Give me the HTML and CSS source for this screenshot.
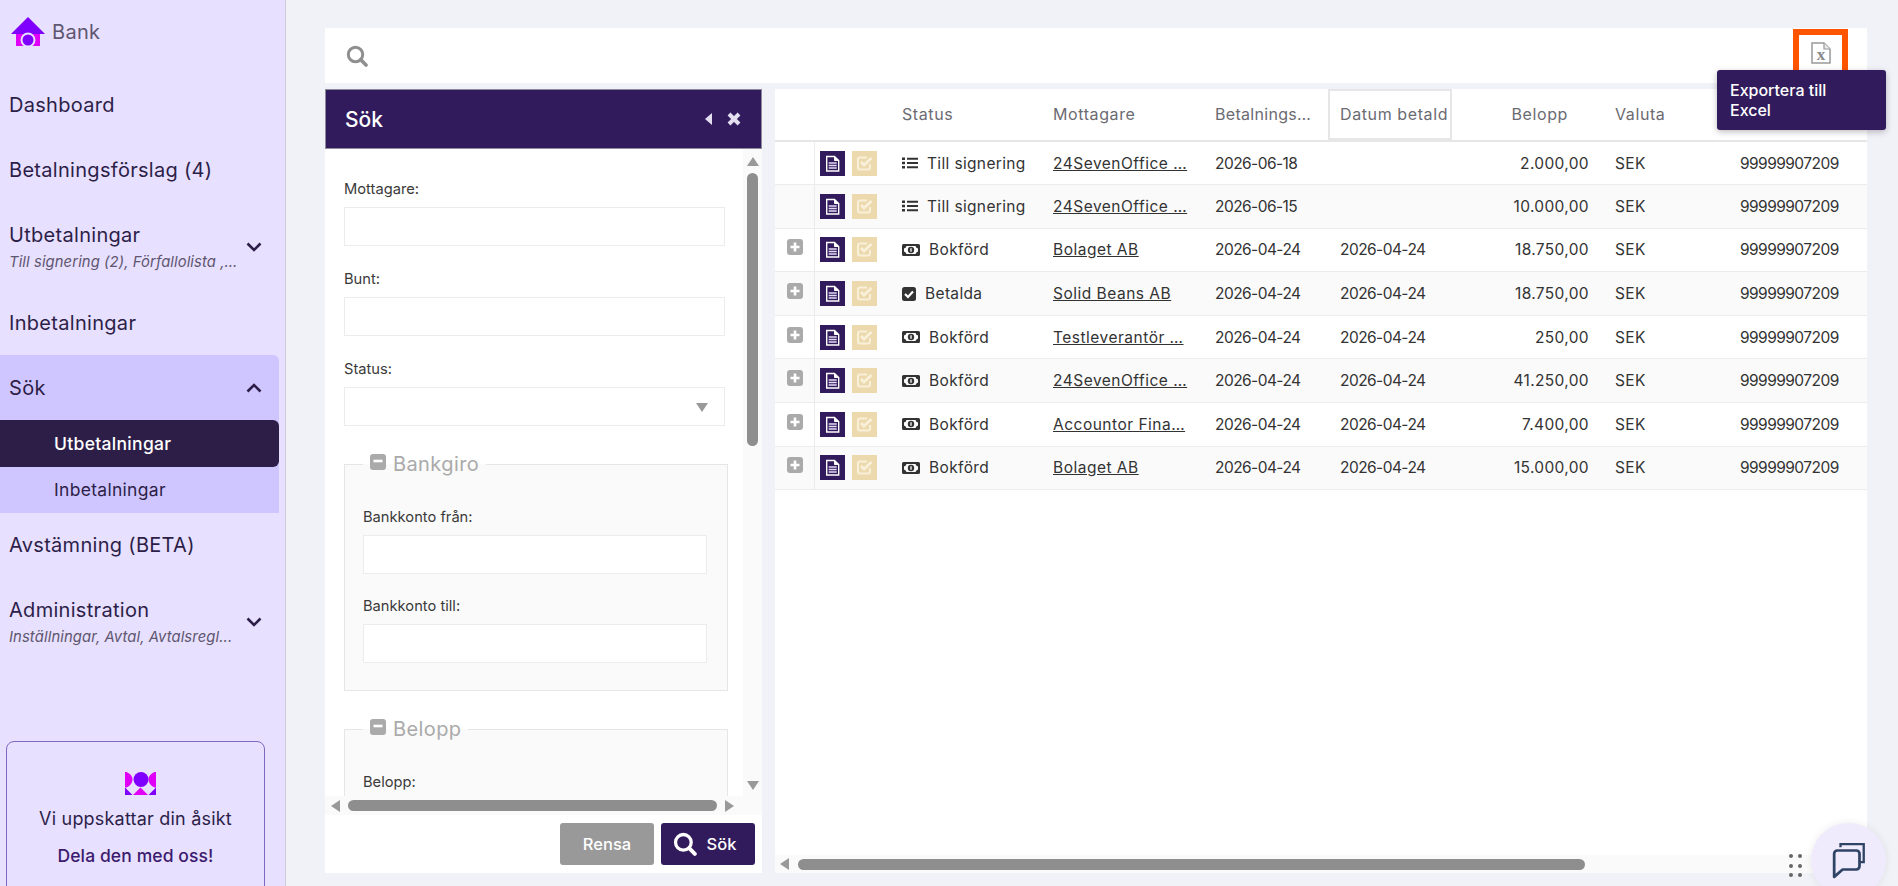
FILE: index.html
```html
<!DOCTYPE html>
<html lang="sv">
<head>
<meta charset="UTF-8">
<title>Bank - Sök utbetalningar</title>
<link rel="stylesheet" href="styles.css">
</head>
<body>
<svg class="defs" width="0" height="0">
    <symbol id="i-search" viewBox="0 0 22 22"><circle cx="9.500" cy="9.500" r="7.200" fill="none" stroke="currentColor" stroke-width="3"/><path d="M14.800 14.800L20 20" stroke="currentColor" stroke-width="3.600" stroke-linecap="round"/></symbol>
    <symbol id="i-doc" viewBox="0 0 25 25"><path d="M6.700 5.500H14.500L18.700 9.500V20H6.700Z" fill="none" stroke="#fff" stroke-width="1.400"/><path d="M14.500 5.500V9.500H18.700" fill="#fff" stroke="#fff"/><path d="M8.700 12H16.700M8.700 14.500H16.700M8.700 17H16.700" stroke="#e3dcf5" stroke-width="1.400"/></symbol>
    <symbol id="i-check" viewBox="0 0 25 25"><path d="M18 13V16.500A2 2 0 0 1 16 18.500H8A2 2 0 0 1 6 16.500V8.500A2 2 0 0 1 8 6.500H15" fill="none" stroke="#f9f0da" stroke-width="2"/><path d="M9 11L12 14L19.500 7" fill="none" stroke="#f9f0da" stroke-width="2.800"/></symbol>
    <symbol id="i-plus" viewBox="0 0 16 16"><rect width="16" height="16" rx="3" fill="#aaa"/><path d="M8 3.500V12.500M3.500 8H12.500" stroke="#fff" stroke-width="2.600"/></symbol>
    <symbol id="i-minus" viewBox="0 0 16 16"><rect width="16" height="16" rx="3" fill="#aaa"/><path d="M3.500 7H12.500" stroke="#fff" stroke-width="2.600"/></symbol>
    <symbol id="i-list" viewBox="0 0 16 12"><path d="M0 0.500H3V3H0ZM0 4.700H3V7.200H0ZM0 9H3V11.500H0Z" fill="#333"/><path d="M5 1.700H16M5 6H16M5 10.200H16" stroke="#333" stroke-width="2"/></symbol>
    <symbol id="i-money" viewBox="0 0 18 12"><rect x="1" y="1" width="16" height="10" rx="0.500" fill="none" stroke="#333" stroke-width="2"/><path d="M1 4.500A3.500 3.500 0 0 0 4.500 1H1ZM17 4.500A3.500 3.500 0 0 1 13.500 1H17ZM1 7.500A3.500 3.500 0 0 1 4.500 11H1ZM17 7.500A3.500 3.500 0 0 0 13.500 11H17Z" fill="#333"/><circle cx="9" cy="6" r="3.200" fill="#333"/><path d="M9 4.200V7.800" stroke="#fff" stroke-width="1.300"/></symbol>
    <symbol id="i-done" viewBox="0 0 14 14"><rect width="14" height="14" rx="2.500" fill="#333"/><path d="M3 7L6 10L11 4.500" fill="none" stroke="#fff" stroke-width="2.200"/></symbol>
</svg>

<aside class="sidebar">
    <div class="brand">
        <svg class="brand-logo" viewBox="0 0 34 29" width="34" height="29">
            <path d="M0 17L17 0L34 17Z" fill="#8000ff"/>
            <path d="M5 17H29V29H5Z" fill="#e000f5"/>
            <circle cx="17" cy="23" r="7.500" fill="#e7e0ff"/>
            <circle cx="17" cy="23" r="5.500" fill="#8000ff"/>
        </svg>
        <span>Bank</span>
    </div>
    <nav class="nav">
        <a class="nav-item">Dashboard</a>
        <a class="nav-item">Betalningsförslag (4)</a>
        <a class="nav-item has-sub">
            <span class="nav-text">Utbetalningar<small>Till signering (2), Förfallolista ,…</small></span>
            <svg class="chevron" viewBox="0 0 16 10" width="16" height="10"><path d="M1.500 1.500L8 8L14.500 1.500"/></svg>
        </a>
        <a class="nav-item">Inbetalningar</a>
        <div class="nav-group">
            <a class="nav-item open">
                <span>Sök</span>
                <svg class="chevron" viewBox="0 0 16 10" width="16" height="10"><path d="M1.500 8.500L8 2L14.500 8.500"/></svg>
            </a>
            <a class="nav-sub active">Utbetalningar</a>
            <a class="nav-sub">Inbetalningar</a>
        </div>
        <a class="nav-item">Avstämning (BETA)</a>
        <a class="nav-item has-sub">
            <span class="nav-text">Administration<small>Inställningar, Avtal, Avtalsregl...</small></span>
            <svg class="chevron" viewBox="0 0 16 10" width="16" height="10"><path d="M1.500 1.500L8 8L14.500 1.500"/></svg>
        </a>
    </nav>
    <div class="feedback">
        <svg viewBox="0 0 31 23" width="31" height="23">
            <path d="M0 0H1.500C9.500 3 9.500 12 1.500 15.500H0Z" fill="#e000f5"/>
            <path d="M31 0H29.500C21.500 3 21.500 12 29.500 15.500H31Z" fill="#e000f5"/>
            <circle cx="16" cy="7.500" r="7.500" fill="#8000ff"/>
            <path d="M0 15.500L7.500 23H0ZM31 15.500V23H23.500Z" fill="#8000ff"/>
            <path d="M15.500 15.500L23 23H8Z" fill="#e000f5"/>
        </svg>
        <p>Vi uppskattar din åsikt</p>
        <a>Dela den med oss!</a>
    </div>
</aside>

<main class="main">
    <div class="toolbar">
        <svg class="toolbar-search" width="22" height="22"><use href="#i-search"/></svg>
        <div class="export">
            <svg viewBox="0 0 20 22" width="20" height="22">
                <path d="M1 1H13L19 7V21H1Z" fill="#fff" stroke="#999" stroke-width="1.500"/>
                <path d="M13 1V7H19" fill="#e8e8e8" stroke="#999" stroke-width="1.200"/>
                <text x="10" y="18" text-anchor="middle" class="export-x">x</text>
            </svg>
        </div>
    </div>

    <div class="content">
        <section class="search-panel">
            <header class="panel-head">
                <span>Sök</span>
                <span class="panel-actions">
                    <i class="arrow arrow-left head-arrow"></i>
                    <svg viewBox="0 0 14 14" width="14" height="14"><path d="M2 2L12 12M12 2L2 12" stroke="#e3dff0" stroke-width="4"/></svg>
                </span>
            </header>
            <div class="panel-body">
                <div class="panel-scroll">
                    <form class="filters">
                        <label class="field">Mottagare:<input type="text"></label>
                        <label class="field">Bunt:<input type="text"></label>
                        <label class="field">Status:
                            <span class="select"><i class="arrow arrow-down"></i></span>
                        </label>
                        <fieldset class="group">
                            <legend><svg width="16" height="16"><use href="#i-minus"/></svg>Bankgiro</legend>
                            <label class="field">Bankkonto från:<input type="text"></label>
                            <label class="field">Bankkonto till:<input type="text"></label>
                        </fieldset>
                        <fieldset class="group">
                            <legend><svg width="16" height="16"><use href="#i-minus"/></svg>Belopp</legend>
                            <label class="field">Belopp:<input type="text"></label>
                        </fieldset>
                    </form>
                    <div class="vbar">
                        <i class="arrow arrow-up"></i>
                        <div class="vbar-thumb"></div>
                        <i class="arrow arrow-down vbar-end"></i>
                    </div>
                </div>
                <div class="hbar">
                    <i class="arrow arrow-left"></i>
                    <div class="hbar-thumb"></div>
                    <i class="arrow arrow-right"></i>
                </div>
            </div>
            <footer class="panel-foot">
                <button class="btn btn-clear" type="button">Rensa</button>
                <button class="btn btn-search" type="button"><svg width="24" height="24"><use href="#i-search"/></svg>Sök</button>
            </footer>
        </section>

        <section class="results">
            <div class="table-wrap">
                <table class="grid">
                    <colgroup>
                        <col class="c-exp"><col class="c-act"><col class="c-status"><col class="c-name">
                        <col class="c-date"><col class="c-paid"><col class="c-sum"><col class="c-cur"><col class="c-acc">
                    </colgroup>
                    <thead>
                        <tr>
                            <th></th><th></th><th>Status</th><th>Mottagare</th><th class="cut">Betalnings…</th>
                            <th class="sorted">Datum betald</th><th class="num">Belopp</th><th class="cur">Valuta</th><th></th>
                        </tr>
                    </thead>
                    <tbody>
                        <tr>
                            <td class="exp"></td>
                            <td class="act"><span class="tag tag-doc"><svg width="25" height="25"><use href="#i-doc"/></svg></span><span class="tag tag-ok"><svg width="25" height="25"><use href="#i-check"/></svg></span></td>
                            <td><span class="state"><svg width="16" height="12"><use href="#i-list"/></svg>Till signering</span></td>
                            <td><a class="link">24SevenOffice …</a></td>
                            <td>2026-06-18</td><td></td><td class="num">2.000,00</td><td class="cur">SEK</td><td>99999907209</td>
                        </tr>
                        <tr>
                            <td class="exp"></td>
                            <td class="act"><span class="tag tag-doc"><svg width="25" height="25"><use href="#i-doc"/></svg></span><span class="tag tag-ok"><svg width="25" height="25"><use href="#i-check"/></svg></span></td>
                            <td><span class="state"><svg width="16" height="12"><use href="#i-list"/></svg>Till signering</span></td>
                            <td><a class="link">24SevenOffice …</a></td>
                            <td>2026-06-15</td><td></td><td class="num">10.000,00</td><td class="cur">SEK</td><td>99999907209</td>
                        </tr>
                        <tr>
                            <td class="exp"><svg width="16" height="16"><use href="#i-plus"/></svg></td>
                            <td class="act"><span class="tag tag-doc"><svg width="25" height="25"><use href="#i-doc"/></svg></span><span class="tag tag-ok"><svg width="25" height="25"><use href="#i-check"/></svg></span></td>
                            <td><span class="state"><svg width="18" height="12"><use href="#i-money"/></svg>Bokförd</span></td>
                            <td><a class="link">Bolaget AB</a></td>
                            <td>2026-04-24</td><td>2026-04-24</td><td class="num">18.750,00</td><td class="cur">SEK</td><td>99999907209</td>
                        </tr>
                        <tr>
                            <td class="exp"><svg width="16" height="16"><use href="#i-plus"/></svg></td>
                            <td class="act"><span class="tag tag-doc"><svg width="25" height="25"><use href="#i-doc"/></svg></span><span class="tag tag-ok"><svg width="25" height="25"><use href="#i-check"/></svg></span></td>
                            <td><span class="state"><svg width="14" height="14"><use href="#i-done"/></svg>Betalda</span></td>
                            <td><a class="link">Solid Beans AB</a></td>
                            <td>2026-04-24</td><td>2026-04-24</td><td class="num">18.750,00</td><td class="cur">SEK</td><td>99999907209</td>
                        </tr>
                        <tr>
                            <td class="exp"><svg width="16" height="16"><use href="#i-plus"/></svg></td>
                            <td class="act"><span class="tag tag-doc"><svg width="25" height="25"><use href="#i-doc"/></svg></span><span class="tag tag-ok"><svg width="25" height="25"><use href="#i-check"/></svg></span></td>
                            <td><span class="state"><svg width="18" height="12"><use href="#i-money"/></svg>Bokförd</span></td>
                            <td><a class="link">Testleverantör …</a></td>
                            <td>2026-04-24</td><td>2026-04-24</td><td class="num">250,00</td><td class="cur">SEK</td><td>99999907209</td>
                        </tr>
                        <tr>
                            <td class="exp"><svg width="16" height="16"><use href="#i-plus"/></svg></td>
                            <td class="act"><span class="tag tag-doc"><svg width="25" height="25"><use href="#i-doc"/></svg></span><span class="tag tag-ok"><svg width="25" height="25"><use href="#i-check"/></svg></span></td>
                            <td><span class="state"><svg width="18" height="12"><use href="#i-money"/></svg>Bokförd</span></td>
                            <td><a class="link">24SevenOffice …</a></td>
                            <td>2026-04-24</td><td>2026-04-24</td><td class="num">41.250,00</td><td class="cur">SEK</td><td>99999907209</td>
                        </tr>
                        <tr>
                            <td class="exp"><svg width="16" height="16"><use href="#i-plus"/></svg></td>
                            <td class="act"><span class="tag tag-doc"><svg width="25" height="25"><use href="#i-doc"/></svg></span><span class="tag tag-ok"><svg width="25" height="25"><use href="#i-check"/></svg></span></td>
                            <td><span class="state"><svg width="18" height="12"><use href="#i-money"/></svg>Bokförd</span></td>
                            <td><a class="link">Accountor Fina…</a></td>
                            <td>2026-04-24</td><td>2026-04-24</td><td class="num">7.400,00</td><td class="cur">SEK</td><td>99999907209</td>
                        </tr>
                        <tr>
                            <td class="exp"><svg width="16" height="16"><use href="#i-plus"/></svg></td>
                            <td class="act"><span class="tag tag-doc"><svg width="25" height="25"><use href="#i-doc"/></svg></span><span class="tag tag-ok"><svg width="25" height="25"><use href="#i-check"/></svg></span></td>
                            <td><span class="state"><svg width="18" height="12"><use href="#i-money"/></svg>Bokförd</span></td>
                            <td><a class="link">Bolaget AB</a></td>
                            <td>2026-04-24</td><td>2026-04-24</td><td class="num">15.000,00</td><td class="cur">SEK</td><td>99999907209</td>
                        </tr>
                    </tbody>
                </table>
            </div>
            <div class="hbar hbar-results">
                <i class="arrow arrow-left"></i>
                <div class="hbar-thumb"></div>
            </div>
        </section>
    </div>
</main>

<div class="tooltip">Exportera till Excel</div>

<div class="grip"><i></i><i></i><i></i><i></i><i></i><i></i></div>
<div class="chat">
    <svg viewBox="0 0 36 36" width="38" height="38">
        <path d="M9 6V3H31V20H27" fill="none" stroke="#2f4365" stroke-width="2.200"/>
        <path d="M3 12A3 3 0 0 1 6 9H24A3 3 0 0 1 27 12V24A3 3 0 0 1 24 27H11L3 34Z" fill="none" stroke="#2f4365" stroke-width="2.600" stroke-linejoin="round"/>
    </svg>
</div>
</body>
</html>
```

FILE: styles.css
```css
* {
    box-sizing: border-box;
}
html, body {
    height: 100%;
}
body {
    margin: 0;
    display: flex;
    overflow: hidden;
    font-family: Inter, "Noto Sans", sans-serif;
    color: #333;
    background: #f1f1f8;
}
.defs {
    position: absolute;
}

/* sidebar */
.sidebar {
    flex: 0 0 286px;
    height: 886px;
    overflow: hidden;
    background: #e7e0ff;
    border-right: 1px solid #cfcdd8;
    color: #2d1e48;
}
.brand {
    height: 73px;
    padding: 17px 0 0 11px;
    display: flex;
    align-items: flex-start;
    gap: 7px;
    font-size: 20px;
    letter-spacing: 0.3px;
    color: #5f5670;
}
.brand span {
    line-height: 30px;
}
.nav {
    width: 279px;
}
.nav-item {
    height: 65px;
    padding: 0 17px 2px 9px;
    display: flex;
    align-items: center;
    justify-content: space-between;
    font-size: 20px;
    letter-spacing: 0.3px;
}
.nav-item.has-sub {
    height: 87px;
    padding-bottom: 0;
}
.nav-item.has-sub + .nav-item, .nav-item.open {
    padding-bottom: 0;
}
.nav-text small {
    display: block;
    margin-top: 6px;
    font-size: 14.800px;
    font-style: italic;
    letter-spacing: 0.1px;
    color: #5f5670;
}
.chevron path {
    fill: none;
    stroke: #2d1e48;
    stroke-width: 2.600;
}
.nav-group {
    background: #d0c6ff;
    border-radius: 0 6px 0 0;
}
.nav-sub {
    display: block;
    height: 46px;
    padding-left: 54px;
    font-size: 17.500px;
    letter-spacing: 0.3px;
    line-height: 46px;
}
.nav-sub.active {
    height: 47px;
    line-height: 47px;
    color: #fff;
    font-weight: 500;
    background: #2d1e48;
    border-radius: 0 6px 6px 0;
}
.feedback {
    width: 259px;
    height: 170px;
    margin: 76px 0 0 6px;
    padding-top: 30px;
    border: 1px solid #7e68c0;
    border-radius: 8px;
    text-align: center;
    font-size: 18px;
    letter-spacing: 0.2px;
}
.feedback svg {
    display: block;
    margin-left: 118px;
}
.feedback p {
    margin: 13px 0 15px;
    line-height: 22px;
}
.feedback a {
    color: #3c1a6e;
    font-size: 17.500px;
    letter-spacing: 0.1px;
    font-weight: 500;
}

/* main */
.main {
    flex: 1;
    padding: 28px 31px 0 39px;
    display: flex;
    flex-direction: column;
}
.toolbar {
    height: 55px;
    padding: 1px 19px 0 21px;
    display: flex;
    align-items: flex-start;
    justify-content: space-between;
    background: #fff;
}
.toolbar-search {
    margin-top: 16px;
    color: #8f8f8f;
}
.export {
    width: 55px;
    height: 47px;
    display: flex;
    align-items: center;
    justify-content: center;
    border: 6px solid #ff5500;
}
.export-x {
    font-family: "Liberation Serif", serif;
    font-size: 17px;
    font-weight: bold;
    fill: #888;
}
.content {
    margin-top: 6px;
    height: 784px;
    display: flex;
    gap: 13px;
}

/* search panel */
.search-panel {
    width: 437px;
    height: 784px;
    display: flex;
    flex-direction: column;
    background: #fff;
}
.panel-head {
    height: 60px;
    flex: none;
    padding: 0 20px 0 19px;
    display: flex;
    align-items: center;
    justify-content: space-between;
    color: #fff;
    font-size: 21px;
    font-weight: 500;
    background: #321b5c;
    border: 1px solid #8b8b9c;
}
.panel-actions {
    display: flex;
    align-items: center;
    gap: 15px;
}
.panel-body {
    height: 666px;
    flex: none;
    display: flex;
    flex-direction: column;
}
.panel-scroll {
    height: 647px;
    flex: none;
    display: flex;
}
.filters {
    flex: 1;
    padding: 30px 18px 0 19px;
    overflow: hidden;
}
.field {
    display: block;
    font-size: 14.700px;
    line-height: 20px;
    color: #3a3a3a;
    margin-bottom: 23px;
}
.field input, .select {
    display: block;
    width: 100%;
    height: 39px;
    margin-top: 8px;
    border: 1px solid #ececec;
    background: #fff;
    padding: 0;
}
.select {
    position: relative;
    display: flex;
    align-items: center;
    justify-content: flex-end;
    padding: 2px 16px 0 0;
}
.group {
    margin: 26px -3px 26px 0;
    padding: 31px 20px 5px 18px;
    border: 1px solid #e6e6e6;
    background: #fafafa;
    min-width: 0;
}
.group .field {
    margin-bottom: 22px;
}
.group legend {
    margin-left: 0;
    padding: 0 7px;
    display: flex;
    align-items: center;
    gap: 7px;
    font-size: 20px;
    letter-spacing: 0.4px;
    line-height: 24px;
    color: #aaa;
}
.group legend svg {
    margin-top: -5px;
}
.vbar {
    width: 19px;
    flex: none;
    padding-top: 8px;
    display: flex;
    flex-direction: column;
    align-items: center;
    background: #fafafa;
}
.vbar-thumb {
    width: 11px;
    height: 273px;
    margin-top: 7px;
    border-radius: 6px;
    background: #8e8e8e;
}
.vbar-end {
    margin-top: auto;
    margin-bottom: 6px;
}
.hbar {
    height: 19px;
    flex: none;
    padding: 0 25px 0 6px;
    display: flex;
    align-items: center;
    gap: 8px;
    background: #fafafa;
}
.hbar-thumb {
    width: 369px;
    height: 11px;
    border-radius: 6px;
    background: #8e8e8e;
}
.arrow {
    display: block;
    width: 0;
    height: 0;
    border-style: solid;
    border-color: transparent;
}
.arrow-up {
    border-width: 0 6.500px 9px;
    border-bottom-color: #999;
}
.arrow-down {
    border-width: 9px 6.500px 0;
    border-top-color: #999;
}
.arrow-left {
    border-width: 6.500px 9px 6.500px 0;
    border-right-color: #999;
}
.arrow-right {
    border-width: 6.500px 0 6.500px 9px;
    border-left-color: #999;
}
.head-arrow {
    border-width: 6px 7px 6px 0;
    border-right-color: #e3dff0;
}
.panel-foot {
    flex: 1;
    padding: 8px 7px 8px 0;
    display: flex;
    justify-content: flex-end;
    gap: 7px;
}
.btn {
    width: 94px;
    border: 0;
    border-radius: 3px;
    color: #fff;
    font: 500 16.500px Inter, "Noto Sans", sans-serif;
    display: flex;
    align-items: center;
    justify-content: center;
}
.btn-clear {
    background: #999;
}
.btn-search {
    gap: 10px;
    padding: 0 7px 0 0;
    background: #321b5c;
}

/* results */
.results {
    width: 1092px;
    display: flex;
    flex-direction: column;
    background: #fff;
}
.table-wrap {
    flex: 1;
    overflow: hidden;
}
.grid {
    width: 1092px;
    table-layout: fixed;
    border-collapse: collapse;
    font-size: 15.500px;
    letter-spacing: 0.35px;
}
.c-exp { width: 39px; }
.c-act { width: 76px; }
.c-status { width: 151px; }
.c-name { width: 162px; }
.c-date { width: 125px; }
.c-paid { width: 124px; }
.c-sum { width: 149px; }
.c-cur { width: 127px; }
.c-acc { width: 139px; }
.grid th {
    height: 52px;
    padding: 0 0 1px 12px;
    font-size: 16px;
    font-weight: 400;
    letter-spacing: 0.6px;
    text-align: left;
    color: #6b6b72;
    white-space: nowrap;
    border-bottom: 2px solid #e6e6e6;
}
.grid th.cut {
    letter-spacing: 0.3px;
}
.grid th.sorted {
    box-shadow: inset 0 0 0 2px #e6e6e6;
}
.grid th.num {
    padding: 0 33px 1px 0;
    text-align: right;
}
.grid td {
    height: 43.600px;
    padding: 0 0 0 12px;
    white-space: nowrap;
    border-bottom: 1px solid #ececec;
}
.grid td:nth-child(5), .grid td:nth-child(6), .grid td:nth-child(9) {
    letter-spacing: -0.55px;
}
.grid td.num {
    padding: 0 12px 0 0;
    text-align: right;
}
.grid .cur {
    padding-left: 14px;
}
.grid tbody tr:nth-child(even) {
    background: #fafafa;
}
.grid td.exp {
    padding: 0 0 5px 12px;
    border-right: 1px solid #ececec;
}
.exp svg {
    display: block;
}
.grid td.act {
    padding: 0 0 0 5px;
}
.act span {
    display: inline-block;
    width: 25px;
    height: 25px;
    vertical-align: middle;
}
.act svg {
    display: block;
}
.tag-doc {
    margin-right: 7px;
    background: #321b5c;
}
.tag-ok {
    background: #ecd9ae;
}
.state {
    display: flex;
    align-items: center;
    gap: 9px;
}
.link {
    color: #333;
    letter-spacing: 0.5px;
    text-decoration: underline;
}
.hbar-results {
    height: 18px;
    padding: 0 0 0 5px;
    gap: 9px;
}
.hbar-results .hbar-thumb {
    width: 787px;
}

/* things lying over the page */
.tooltip {
    position: absolute;
    left: 1717px;
    top: 70px;
    width: 169px;
    height: 60px;
    padding: 10px 30px 0 13px;
    border-radius: 3px;
    color: #fff;
    font-size: 16px;
    font-weight: 500;
    line-height: 20px;
    background: #321b5c;
    box-shadow: 0 2px 6px rgba(0, 0, 0, 0.25);
}
.grip {
    position: absolute;
    left: 1789px;
    top: 854px;
    display: grid;
    grid-template-columns: 4px 4px;
    gap: 5.500px 5px;
}
.grip i {
    width: 4px;
    height: 4px;
    border-radius: 50%;
    background: #666;
}
.chat {
    position: absolute;
    left: 1811px;
    top: 823px;
    width: 75px;
    height: 75px;
    padding: 18px 0 0 20px;
    border-radius: 50%;
    background: #f0ebfc;
    box-shadow: 0 0 8px rgba(0, 0, 0, 0.08);
}
```
